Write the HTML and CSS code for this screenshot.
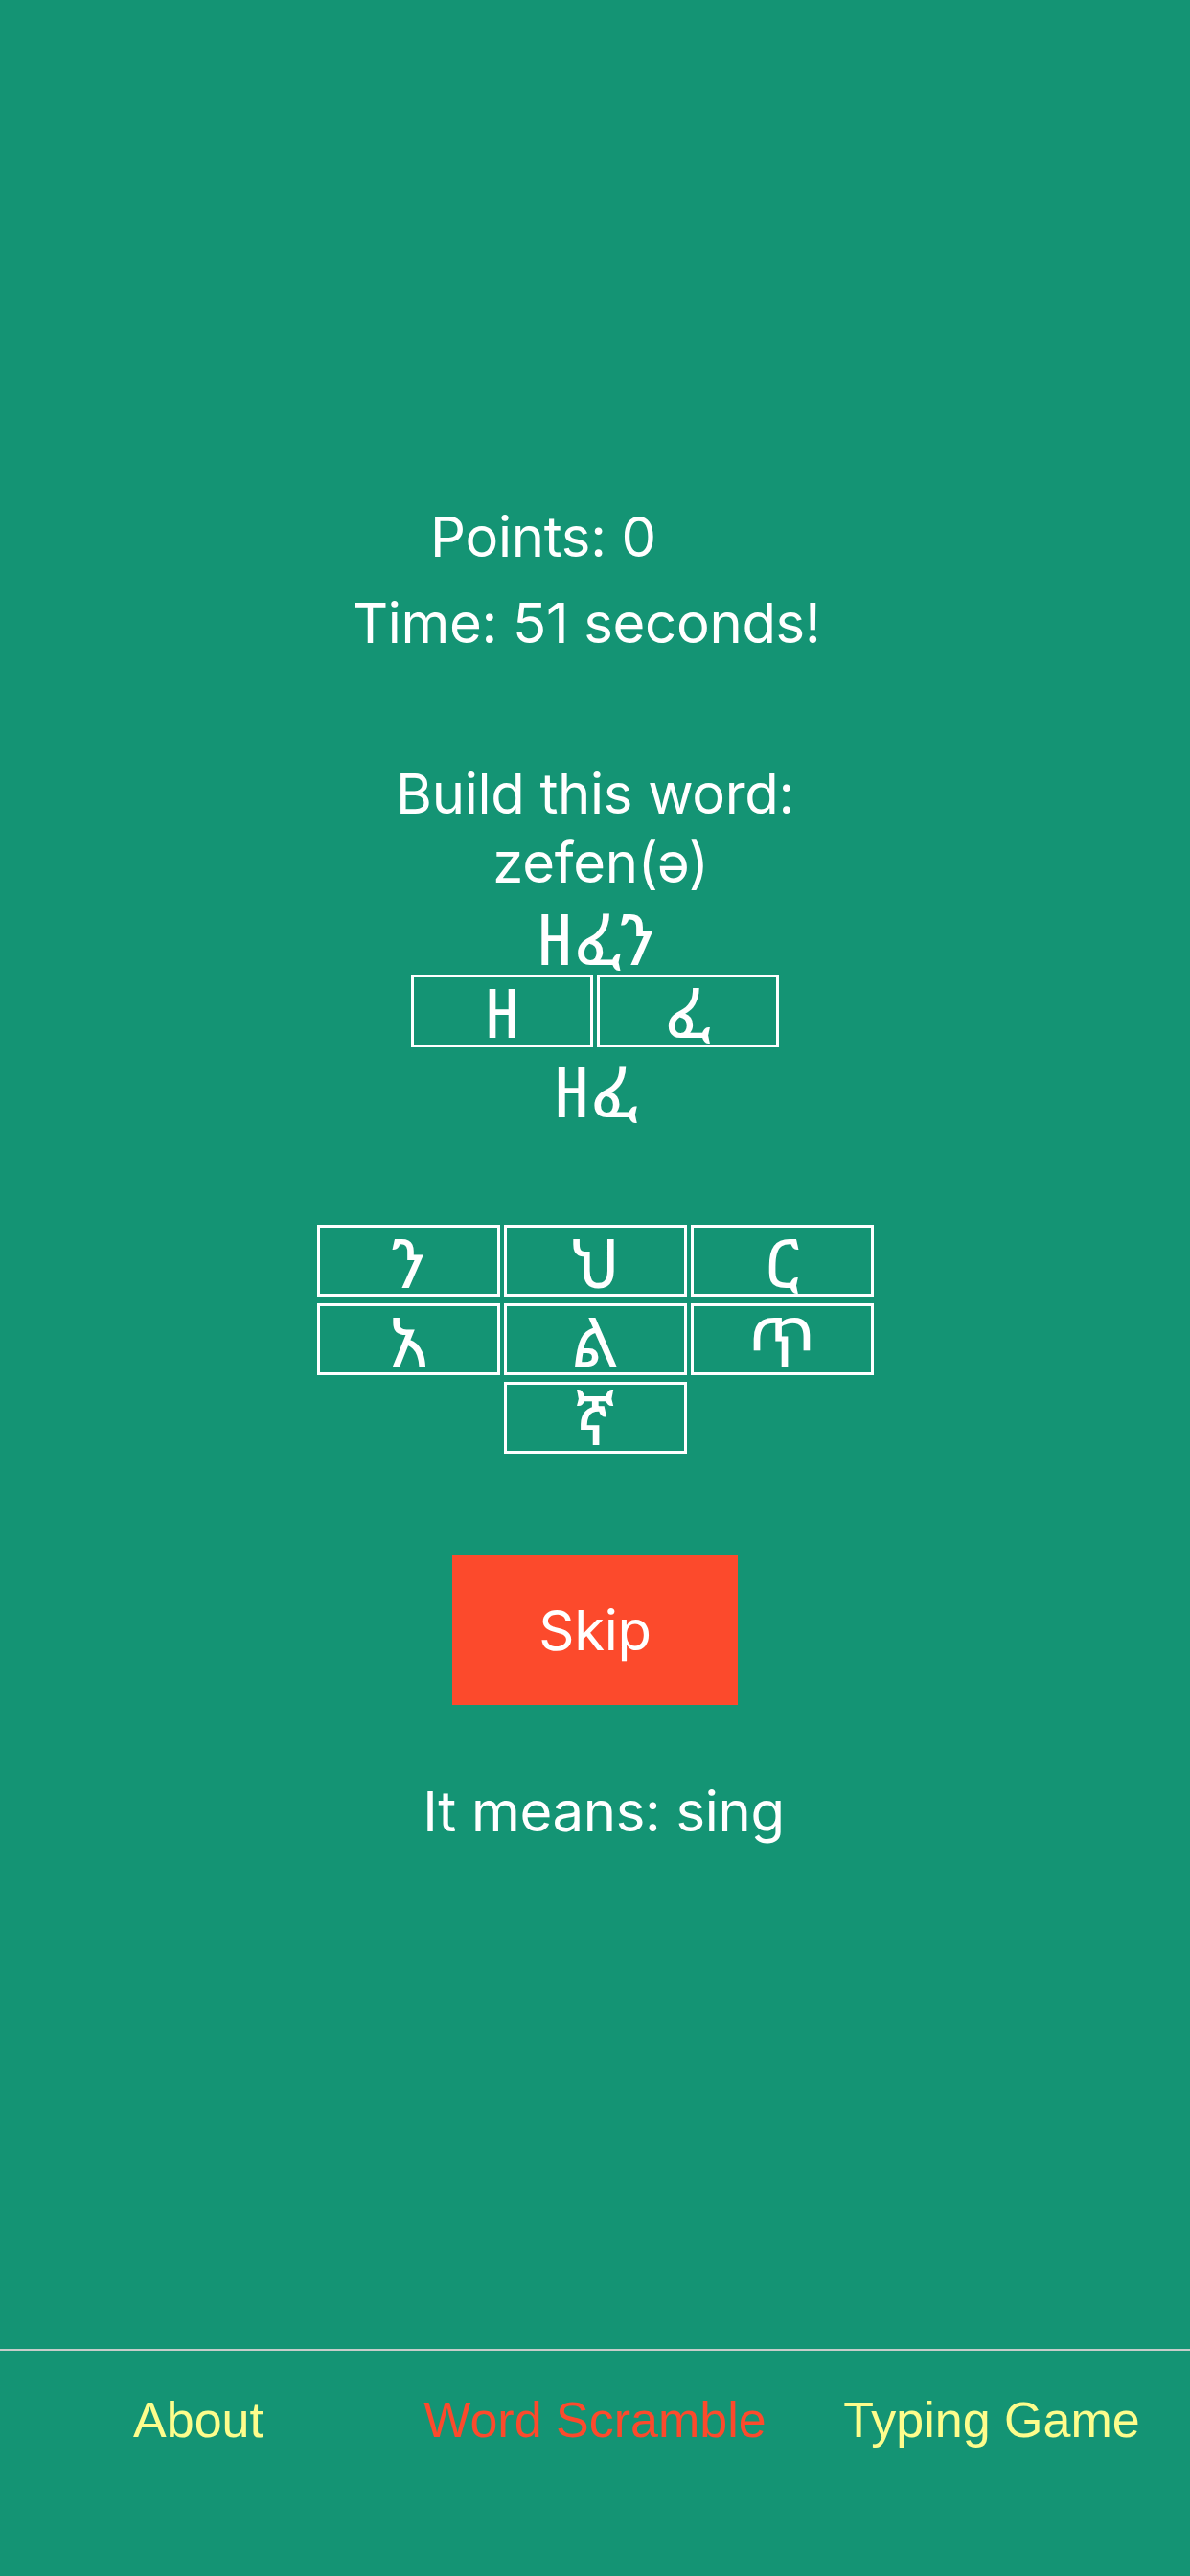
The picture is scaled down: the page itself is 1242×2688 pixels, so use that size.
FILE: index.html
```html
<!DOCTYPE html>
<html lang="en">
<head>
<meta charset="utf-8">
<title>Word Scramble</title>
<link rel="stylesheet" href="styles.css">
</head>
<body>
<div class="screen">
  <main class="game">
    <div class="points">Points: 0</div>
    <div class="time">Time: 51 seconds!</div>
    <div class="prompt">Build this word:</div>
    <div class="translit">zefen(ə)</div>
    <div class="target eth">ዘፈን</div>
    <div class="slots">
      <div class="tile eth">ዘ</div>
      <div class="tile eth">ፈ</div>
    </div>
    <div class="built eth">ዘፈ</div>
    <div class="letters">
      <div class="tile eth">ን</div>
      <div class="tile eth">ህ</div>
      <div class="tile eth">ር</div>
      <div class="tile eth">አ</div>
      <div class="tile eth">ል</div>
      <div class="tile eth">ጥ</div>
      <div class="tile eth mid">ኛ</div>
    </div>
    <button class="skip">Skip</button>
    <div class="meaning">It means: sing</div>
  </main>
  <nav class="tabbar">
    <div class="tab">About</div>
    <div class="tab active">Word Scramble</div>
    <div class="tab">Typing Game</div>
  </nav>
</div>
</body>
</html>
```
FILE: styles.css
```css
html, body {
  margin: 0;
  padding: 0;
}
body {
  background: #149474;
  width: 1242px;
  height: 2688px;
  overflow: hidden;
}
.screen {
  display: flex;
  flex-direction: column;
  height: 2688px;
  color: #ffffff;
  font-family: Inter, "Noto Sans", "Liberation Sans", sans-serif;
}
.game {
  display: flex;
  flex-direction: column;
  align-items: center;
  padding-top: 520px;
  font-size: 58px;
  letter-spacing: -0.3px;
}
.eth {
  font-family: "Noto Sans Ethiopic", "Abyssinica SIL", "FreeSerif", "DejaVu Sans", "Noto Sans", serif;
  letter-spacing: 0;
}
.points {
  line-height: 80px;
  height: 80px;
  padding-right: 108px;
}
.time {
  margin-top: 10px;
  line-height: 80px;
  height: 80px;
  padding-right: 18px;
}
.prompt {
  margin-top: 102px;
  line-height: 72px;
  height: 72px;
}
.translit {
  line-height: 72px;
  height: 72px;
  padding-left: 12px;
}
.target {
  margin-top: 4px;
  height: 77px;
  line-height: 77px;
  font-size: 74px;
}
.slots {
  display: flex;
  gap: 4px;
}
.tile {
  box-sizing: border-box;
  width: 190px;
  height: 76px;
  border: 3px solid #ffffff;
  display: flex;
  align-items: center;
  justify-content: center;
  font-size: 72px;
  line-height: 60px;
}
.built {
  height: 84px;
  line-height: 84px;
  margin-top: 3px;
  font-size: 74px;
}
.letters {
  margin-top: 98px;
  display: grid;
  grid-template-columns: repeat(3, 191px);
  column-gap: 4px;
  row-gap: 7px;
}
.letters .tile {
  width: 191px;
  height: 75px;
}
.letters .mid {
  grid-column: 2;
}
.skip {
  margin-top: 106px;
  width: 298px;
  height: 156px;
  border: none;
  background: #fc4a2c;
  color: #ffffff;
  font-family: Inter, "Noto Sans", "Liberation Sans", sans-serif;
  font-size: 58px;
  letter-spacing: -0.3px;
  padding: 0;
}
.meaning {
  margin-top: 75px;
  line-height: 72px;
  height: 72px;
  padding-left: 18px;
}
.tabbar {
  margin-top: auto;
  border-top: 2px solid #c6cdca;
  display: grid;
  grid-template-columns: repeat(3, 1fr);
  align-items: start;
  padding-top: 42px;
  box-sizing: border-box;
  height: 237px;
}
.tab {
  text-align: center;
  font-family: "Liberation Sans", Arial, sans-serif;
  font-size: 52px;
  line-height: 60px;
  color: #fdfd8c;
}
.tab.active {
  color: #fc4a2c;
}
```
